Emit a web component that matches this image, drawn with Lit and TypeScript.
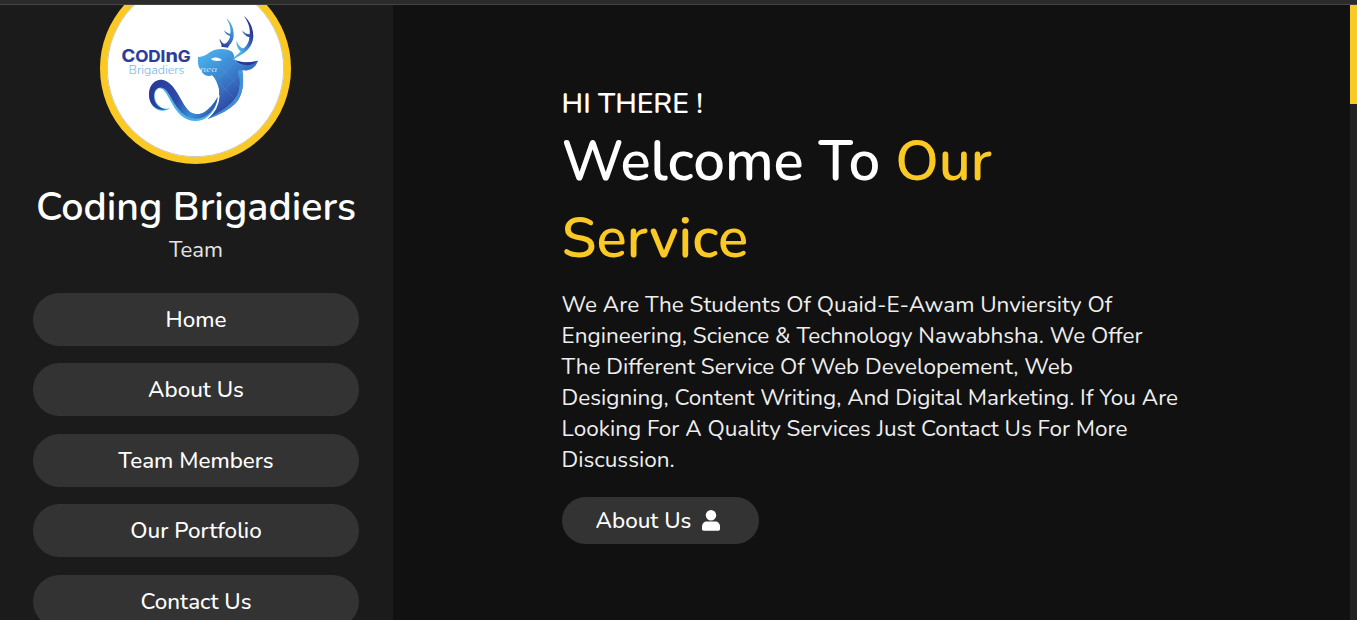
import { LitElement, html, css, svg } from "lit";
import { customElement } from "lit/decorators.js";

const logo = svg`
  <defs>
    <linearGradient id="head" gradientUnits="userSpaceOnUse" x1="335" y1="165" x2="450" y2="320">
      <stop offset="0" stop-color="#4bb0ea"/><stop offset=".45" stop-color="#3b83cf"/><stop offset="1" stop-color="#2c3c9b"/>
    </linearGradient>
    <linearGradient id="horn" gradientUnits="userSpaceOnUse" x1="440" y1="130" x2="490" y2="110">
      <stop offset="0" stop-color="#4db4ec"/><stop offset=".5" stop-color="#3c79c8"/><stop offset="1" stop-color="#2b3795"/>
    </linearGradient>
    <linearGradient id="horn2" gradientUnits="userSpaceOnUse" x1="392" y1="140" x2="428" y2="80">
      <stop offset="0" stop-color="#2b3795"/><stop offset=".5" stop-color="#3a76c6"/><stop offset="1" stop-color="#48a5e2"/>
    </linearGradient>
    <linearGradient id="tail" gradientUnits="userSpaceOnUse" x1="180" y1="270" x2="385" y2="340">
      <stop offset="0" stop-color="#2b3795"/><stop offset=".4" stop-color="#2f4ba8"/><stop offset=".65" stop-color="#3c8ed6"/><stop offset="1" stop-color="#2d4aa6"/>
    </linearGradient>
  </defs>
  <g transform="translate(-17 20) scale(.33333)">
    <path fill="#4cb0ea" d="M243 323C215 345 177 325 177 284C177 252 198 238 215 239C250 243 265 290 290 325C305 347 330 345 345 335C365 320 375 305 383 290C382 320 360 362 318 363C280 363 262 340 240 300C228 275 215 260 204 266C193 272 192 288 197 302C203 320 225 332 243 323Z"/>
    <path fill="url(#tail)" d="M228 328C208 333 177 320 177 284C177 252 198 238 215 239C250 243 265 290 290 325C305 347 330 345 345 335C365 320 375 305 383 290C380 328 350 355 318 356C282 356 264 328 246 298C234 272 220 257 204 264C191 271 190 288 194 302C200 318 212 326 228 328Z"/>
    <path fill="url(#head)" d="M324 171C345 171 355 157 373 150C390 145 410 146 423 153C431 158 434 168 434 180C455 188 478 190 504 182C497 201 484 214 457 211C462 245 460 278 443 302C422 329 387 344 352 357C378 336 389 303 387 268C382 249 376 235 366 226C350 232 337 223 334 211C326 204 323 196 324 171Z"/>
    <path fill="#469fe0" opacity=".8" d="M457 211C462 245 460 278 443 302C422 329 387 344 352 357C389 336 424 318 441 286C452 262 451 236 443 215C448 209 453 208 457 211Z"/>
    <path fill="none" stroke="#fff" stroke-width="4" d="M387 286C386 315 374 338 350 356"/>
    <path fill="#2b3795" d="M434 180C455 188 478 190 504 182C488 197 468 199 448 190Z"/>
    <path fill="#fff" d="M363 177C373 170 388 171 396 181C383 184 371 184 363 177Z"/>
    <path fill="none" stroke="#fff" stroke-opacity=".13" stroke-width="2" d="M348 160L453 265M402 148L458 204M458 214L390 282M430 190L376 244M388 250L441 303"/>
    <path fill="url(#horn2)" d="M409 55C425 68 432 88 431 109C429 127 420 132 414 143L394 140C397 130 388 128 389 116C395 127 402 134 408 130C416 122 420 115 420 108C412 106 404 100 402 91C409 98 415 101 421 101C424 84 417 68 409 55Z"/>
    <path fill="url(#horn)" d="M461 47C480 62 491 86 490 111C488 139 468 158 446 169C440 172 435 176 429 182C431 169 445 164 452 154C443 147 438 134 440 122C444 135 452 144 461 145C472 137 478 123 478 112C468 110 459 102 456 91C463 99 470 103 479 103C482 82 472 62 461 47Z"/>
    <text x="330" y="215" class="mark" textLength="52" lengthAdjust="spacingAndGlyphs">nea</text>
  </g>
  <text class="coding" x="14.4" y="81.8" textLength="69.3" lengthAdjust="spacingAndGlyphs"><tspan class="cap">C</tspan>ODI<tspan class="tall">n</tspan>G</text>
  <text class="brig" x="21.5" y="94.3" textLength="56" lengthAdjust="spacingAndGlyphs">Brigadiers</text>
`;

const NAV = ["Home", "About Us", "Team Members", "Our Portfolio", "Contact Us"];

const LINES = [
  "We Are The Students Of Quaid-E-Awam Unviersity Of",
  "Engineering, Science & Technology Nawabhsha. We Offer",
  "The Different Service Of Web Developement, Web",
  "Designing, Content Writing, And Digital Marketing. If You Are",
  "Looking For A Quality Services Just Contact Us For More",
  "Discussion.",
];

@customElement("app-root")
class AppRoot extends LitElement {
  static styles = css`
    :host {
      display: flex; flex-direction: column; width: 1357px; height: 620px; overflow: hidden;
      background: #111; color: #fff; font-family: Nunito, Lato, sans-serif; font-size: 22.4px; white-space: nowrap;
    }
    * { box-sizing: border-box; }
    .edge { flex: none; height: 5px; background: #2b2b2b; border-bottom: 1px solid #444; }
    .page { flex: 1; min-height: 0; display: flex; overflow: hidden; }
    .side {
      flex: none; width: 393px; padding: 0 34px 0 33px; background: #1b1b1b;
      display: flex; flex-direction: column; align-items: center;
    }
    .avatar {
      flex: none; width: 191px; height: 191px; margin: -32px 1px 0 0; border: 7px solid #fac924;
      border-radius: 50%; background: #fff; overflow: hidden;
    }
    .avatar svg { display: block; width: 177px; height: 177px; }
    .rim { fill: none; stroke: #999; stroke-width: .6; }
    .coding { font: 700 15.8px Inter, sans-serif; fill: #2d3b98; stroke: #2d3b98; stroke-width: .2; }
    .cap { font-size: 17.2px; }
    .tall { font-size: 18.5px; }
    .brig { font: 300 11.5px Nunito, sans-serif; fill: #76b4e6; }
    .mark { font: italic 26px "Liberation Serif", serif; fill: #fff; fill-opacity: .65; }
    .name { margin-top: 19px; height: 48px; line-height: 48px; font-size: 39.4px; font-weight: 600; }
    .team { height: 36px; line-height: 38px; font-size: 22.2px; color: #e4e4e4; }
    nav { align-self: stretch; margin-top: 26px; display: flex; flex-direction: column; gap: 17.4px; }
    .item {
      flex: none; height: 53px; line-height: 54px; border-radius: 27px; background: #333; text-align: center;
      font-weight: 500;
    }
    .main { flex: 1; padding: 83px 0 0 168.6px; display: flex; flex-direction: column; align-items: flex-start; }
    .hi { height: 32px; line-height: 32px; font-size: 28.1px; font-weight: 600; }
    .title { margin-top: 3px; height: 154px; line-height: 77px; font-size: 56.2px; font-weight: 600; }
    .gold { color: #fac924; }
    .copy { margin-top: 12px; font-size: 22.5px; color: #eee; display: flex; flex-direction: column; }
    .line { height: 31px; line-height: 31px; }
    .btn {
      margin-top: 22px; width: 197px; height: 47px; padding-left: 34px; border-radius: 24px; background: #333;
      display: flex; align-items: center; gap: 11px; font-weight: 500;
    }
    .btn svg { width: 18px; height: 21px; fill: #fff; }
    .track { flex: none; width: 7px; background: #222; }
    .thumb { height: 99px; background: #fac924; }
  `;

  render() {
    return html`
      <div class="edge"></div>
      <div class="page">
        <aside class="side">
          <div class="avatar">
            <svg viewBox="0 0 177 177">${logo}<circle class="rim" cx="88.5" cy="88.5" r="88.2" /></svg>
          </div>
          <div class="name">Coding Brigadiers</div>
          <div class="team">Team</div>
          <nav>${NAV.map((t) => html`<div class="item">${t}</div>`)}</nav>
        </aside>
        <main class="main">
          <div class="hi">HI THERE !</div>
          <div class="title">Welcome To <span class="gold">Our<br />Service</span></div>
          <div class="copy">${LINES.map((t) => html`<div class="line">${t}</div>`)}</div>
          <div class="btn">
            <span>About Us</span>
            <svg viewBox="0 0 18 21">
              <circle cx="9" cy="5.3" r="5.2" />
              <path d="M5 11.6H13C16 11.6 18 13.7 18 16.6V19C18 20 17.3 20.7 16.3 20.7H1.7C.7 20.7 0 20 0 19V16.6C0 13.7 2 11.6 5 11.6Z" />
            </svg>
          </div>
        </main>
        <div class="track"><div class="thumb"></div></div>
      </div>
    `;
  }
}
